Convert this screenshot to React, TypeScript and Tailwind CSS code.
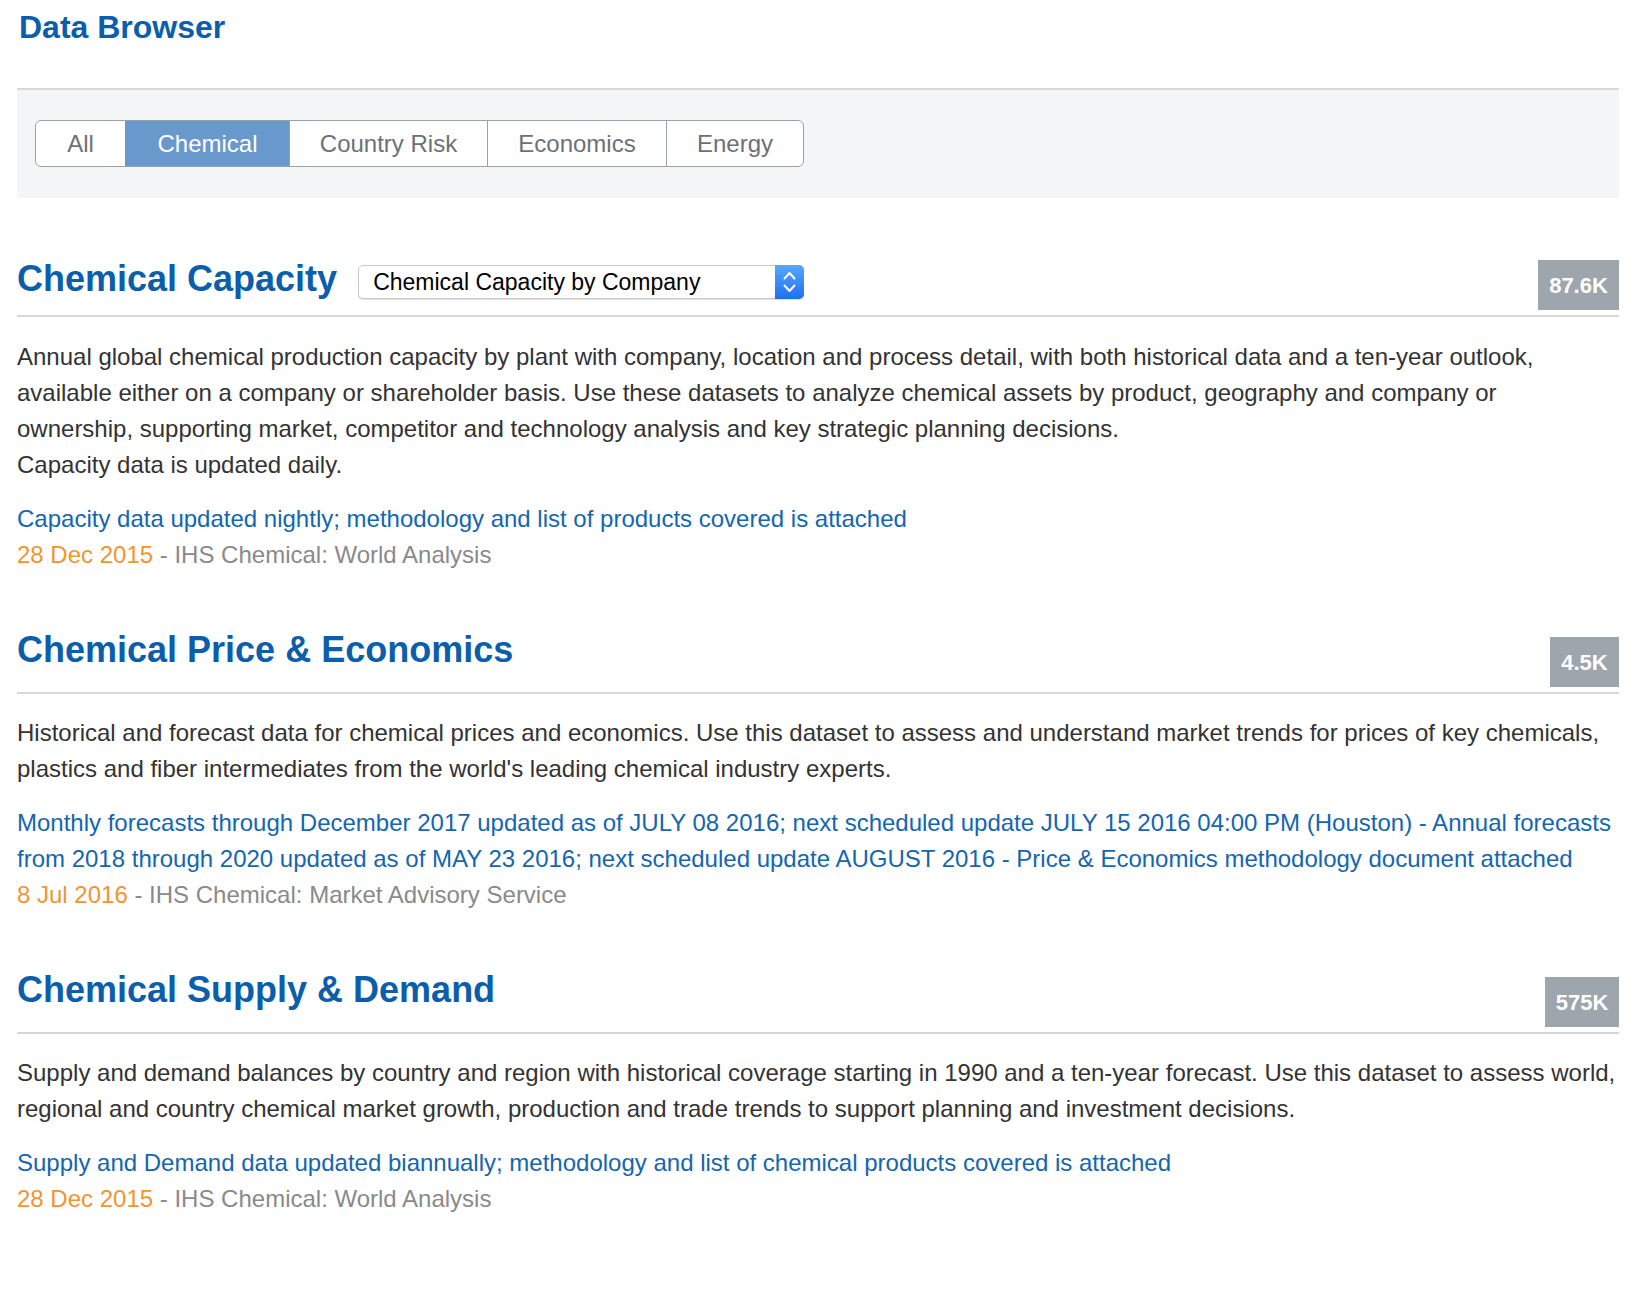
import React from "react";

const FONT = { fontFamily: '"Liberation Sans", Arial, Helvetica, sans-serif' };

type Section = {
  title: string;
  badge: string;
  badgeW: string;
  hasSelect?: boolean;
  para: string[];
  link: string[];
  date: string;
  source: string;
};

const sections: Section[] = [
  {
    title: "Chemical Capacity",
    badge: "87.6K",
    badgeW: "w-[81px]",
    hasSelect: true,
    para: [
      "Annual global chemical production capacity by plant with company, location and process detail, with both historical data and a ten-year outlook,",
      "available either on a company or shareholder basis. Use these datasets to analyze chemical assets by product, geography and company or",
      "ownership, supporting market, competitor and technology analysis and key strategic planning decisions.",
      "Capacity data is updated daily.",
    ],
    link: ["Capacity data updated nightly; methodology and list of products covered is attached"],
    date: "28 Dec 2015",
    source: "IHS Chemical: World Analysis",
  },
  {
    title: "Chemical Price & Economics",
    badge: "4.5K",
    badgeW: "w-[69px]",
    para: [
      "Historical and forecast data for chemical prices and economics. Use this dataset to assess and understand market trends for prices of key chemicals,",
      "plastics and fiber intermediates from the world's leading chemical industry experts.",
    ],
    link: [
      "Monthly forecasts through December 2017 updated as of JULY 08 2016; next scheduled update JULY 15 2016 04:00 PM (Houston) - Annual forecasts",
      "from 2018 through 2020 updated as of MAY 23 2016; next scheduled update AUGUST 2016 - Price & Economics methodology document attached",
    ],
    date: "8 Jul 2016",
    source: "IHS Chemical: Market Advisory Service",
  },
  {
    title: "Chemical Supply & Demand",
    badge: "575K",
    badgeW: "w-[74px]",
    para: [
      "Supply and demand balances by country and region with historical coverage starting in 1990 and a ten-year forecast. Use this dataset to assess world,",
      "regional and country chemical market growth, production and trade trends to support planning and investment decisions.",
    ],
    link: ["Supply and Demand data updated biannually; methodology and list of chemical products covered is attached"],
    date: "28 Dec 2015",
    source: "IHS Chemical: World Analysis",
  },
];

const tabs = [
  { label: "All", w: "w-[89px]" },
  { label: "Chemical", w: "w-[164px]", active: true },
  { label: "Country Risk", w: "w-[198px]" },
  { label: "Economics", w: "w-[179px]" },
  { label: "Energy", w: "w-[137px]" },
];

function SelectBox() {
  return (
    <div className="flex h-[34px] w-[446px] items-stretch rounded-[5px] border border-[#c8c8c8] bg-white shadow-[0_1px_1px_rgba(0,0,0,0.12)]">
      <div className="flex flex-1 items-center pl-[14px] text-[23px] text-black">
        Chemical Capacity by Company
      </div>
      <div className="-my-px -mr-px flex w-[29px] items-center justify-center rounded-r-[5px] bg-gradient-to-b from-[#5aa6fa] to-[#1c6ff0]">
        <svg width="29" height="34" viewBox="0 0 29 34" fill="none" stroke="white" strokeWidth="2" strokeLinecap="round" strokeLinejoin="round">
          <path d="M9.5 13.5 L14.5 8 L19.5 13.5" />
          <path d="M9.5 20.5 L14.5 26 L19.5 20.5" />
        </svg>
      </div>
    </div>
  );
}

function SectionBlock({ s, first }: { s: Section; first: boolean }) {
  return (
    <div className={first ? "mt-[61px]" : "mt-[57px]"}>
      <div className="flex items-end justify-between border-b-2 border-[#d7d7d7] pb-[5px]">
        {s.hasSelect ? (
          <div className="mb-[11px] flex items-end gap-[21px]">
            <h2 className="text-[36px] font-bold leading-[40px] text-[#0b5eab]">{s.title}</h2>
            <SelectBox />
          </div>
        ) : (
          <h2 className="mb-[17px] text-[36px] font-bold leading-[40px] text-[#0b5eab]">{s.title}</h2>
        )}
        <div
          className={`flex h-[50px] ${s.badgeW} items-center justify-center bg-[#9ea6ad] text-[22px] font-bold text-white`}
        >
          {s.badge}
        </div>
      </div>
      <div className={`${first ? "mt-[22px]" : "mt-[21px]"} text-[24px] leading-[36px] text-[#333333]`}>
        {s.para.map((l, i) => (
          <div key={i} className="whitespace-nowrap">
            {l}
          </div>
        ))}
      </div>
      <div className="mt-[18px] text-[24px] leading-[36px]">
        {s.link.map((l, i) => (
          <div key={i} className="whitespace-nowrap text-[#1466b0]">
            {l}
          </div>
        ))}
        <div className="whitespace-nowrap text-[#8a8a8a]">
          <span className="text-[#f29430]">{s.date}</span> - {s.source}
        </div>
      </div>
    </div>
  );
}

export default function App() {
  return (
    <div className="min-h-[1294px] w-[1652px] bg-white" style={FONT}>
      <div className="ml-[17px] w-[1602px]">
        <h1 className="ml-[2px] pt-[9px] text-[32px] font-bold leading-[37px] text-[#0b5eab]">Data Browser</h1>
        <div className="mt-[42px] border-t-2 border-[#d9d9d9] bg-[#f4f5f6] pb-[31px] pl-[18px] pt-[30px]">
          <div className="flex h-[47px] w-fit overflow-hidden rounded-[6px] border border-[#9ba1a8] bg-white">
            {tabs.map((t, i) => (
              <div
                key={t.label}
                className={`flex ${t.w} items-center justify-center text-[24px] ${
                  i > 0 ? "border-l border-[#9ba1a8]" : ""
                } ${t.active ? "bg-[#6898cc] text-white border-[#6898cc]" : "text-[#6c7177]"}`}
              >
                {t.label}
              </div>
            ))}
          </div>
        </div>
        {sections.map((s, i) => (
          <SectionBlock key={s.title} s={s} first={i === 0} />
        ))}
      </div>
    </div>
  );
}
